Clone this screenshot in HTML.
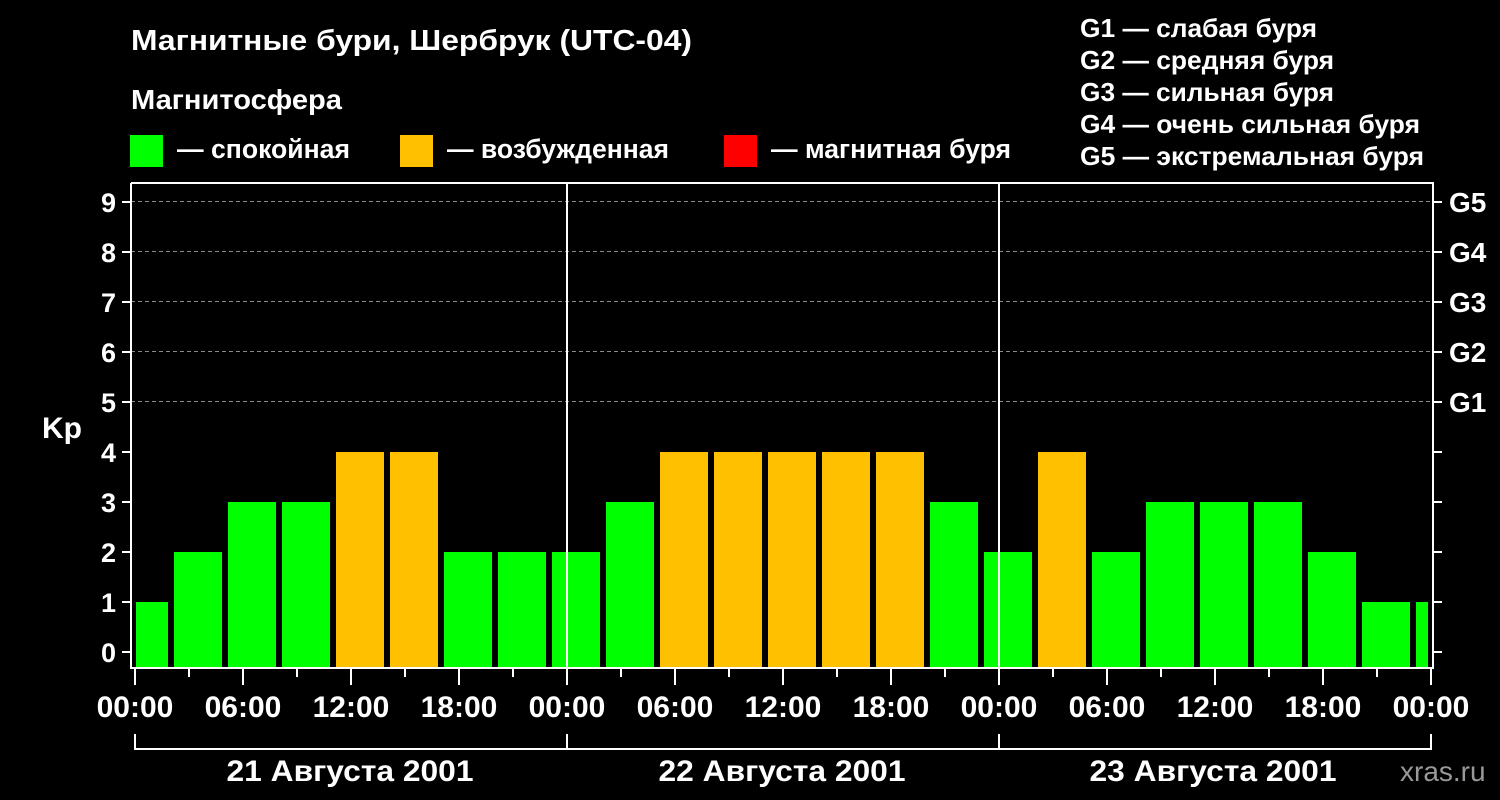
<!DOCTYPE html>
<html><head><meta charset="utf-8"><style>
html,body{margin:0;padding:0;background:#000;width:1500px;height:800px;overflow:hidden}
svg text{font-family:"Liberation Sans",sans-serif;font-weight:bold;fill:#fff}
</style></head><body>
<svg width="1500" height="800" viewBox="0 0 1500 800" xmlns="http://www.w3.org/2000/svg">
<rect width="1500" height="800" fill="#000"/>
<text x="131" y="50" font-size="29" textLength="561" lengthAdjust="spacingAndGlyphs">Магнитные бури, Шербрук (UTC-04)</text>
<text x="131" y="109" font-size="28" textLength="211" lengthAdjust="spacingAndGlyphs">Магнитосфера</text>
<rect x="130" y="135" width="33" height="32" fill="#00ff00"/>
<text x="177" y="158" font-size="27" textLength="173" lengthAdjust="spacingAndGlyphs">— спокойная</text>
<rect x="400" y="135" width="33" height="32" fill="#ffc000"/>
<text x="447" y="158" font-size="27" textLength="222" lengthAdjust="spacingAndGlyphs">— возбужденная</text>
<rect x="724" y="135" width="33" height="32" fill="#ff0000"/>
<text x="771" y="158" font-size="27" textLength="240" lengthAdjust="spacingAndGlyphs">— магнитная буря</text>
<g font-size="26">
<text x="1080" y="37" textLength="237" lengthAdjust="spacingAndGlyphs">G1 — слабая буря</text>
<text x="1080" y="69" textLength="254" lengthAdjust="spacingAndGlyphs">G2 — средняя буря</text>
<text x="1080" y="101" textLength="254" lengthAdjust="spacingAndGlyphs">G3 — сильная буря</text>
<text x="1080" y="133" textLength="340" lengthAdjust="spacingAndGlyphs">G4 — очень сильная буря</text>
<text x="1080" y="165" textLength="344" lengthAdjust="spacingAndGlyphs">G5 — экстремальная буря</text>
</g>
<g stroke="#888" stroke-width="1" stroke-dasharray="4,3">
<line x1="131" y1="201.5" x2="1433" y2="201.5"/>
<line x1="131" y1="251.5" x2="1433" y2="251.5"/>
<line x1="131" y1="301.5" x2="1433" y2="301.5"/>
<line x1="131" y1="351.5" x2="1433" y2="351.5"/>
<line x1="131" y1="401.5" x2="1433" y2="401.5"/>
</g>
<g fill="#00ff00">
<rect x="136" y="602" width="32" height="66"/>
<rect x="174" y="552" width="48" height="116"/>
<rect x="228" y="502" width="48" height="166"/>
<rect x="282" y="502" width="48" height="166"/>
<rect x="444" y="552" width="48" height="116"/>
<rect x="498" y="552" width="48" height="116"/>
<rect x="552" y="552" width="48" height="116"/>
<rect x="606" y="502" width="48" height="166"/>
<rect x="930" y="502" width="48" height="166"/>
<rect x="984" y="552" width="48" height="116"/>
<rect x="1092" y="552" width="48" height="116"/>
<rect x="1146" y="502" width="48" height="166"/>
<rect x="1200" y="502" width="48" height="166"/>
<rect x="1254" y="502" width="48" height="166"/>
<rect x="1308" y="552" width="48" height="116"/>
<rect x="1362" y="602" width="48" height="66"/>
<rect x="1416" y="602" width="12" height="66"/>
</g>
<g fill="#ffc000">
<rect x="336" y="452" width="48" height="216"/>
<rect x="390" y="452" width="48" height="216"/>
<rect x="660" y="452" width="48" height="216"/>
<rect x="714" y="452" width="48" height="216"/>
<rect x="768" y="452" width="48" height="216"/>
<rect x="822" y="452" width="48" height="216"/>
<rect x="876" y="452" width="48" height="216"/>
<rect x="1038" y="452" width="48" height="216"/>
</g>
<g stroke="#fff" stroke-width="2" fill="none">
<path d="M131,183 V668 H1433 V183 H131"/>
<line x1="567" y1="183" x2="567" y2="668"/>
<line x1="999" y1="183" x2="999" y2="668"/>
<path d="M135,734 V749 H1431 V734 M567,734 V749 M999,734 V749"/>
<path d="M122,652H131M122,602H131M122,552H131M122,502H131M122,452H131M122,402H131M122,352H131M122,302H131M122,252H131M122,202H131"/>
<path d="M1433,652H1442M1433,602H1442M1433,552H1442M1433,502H1442M1433,452H1442M1433,402H1442M1433,352H1442M1433,302H1442M1433,252H1442M1433,202H1442"/>
<path d="M135,668V685M189,668V677M243,668V685M297,668V677M351,668V685M405,668V677M459,668V685M513,668V677M567,668V685M621,668V677M675,668V685M729,668V677M783,668V685M837,668V677M891,668V685M945,668V677M999,668V685M1053,668V677M1107,668V685M1161,668V677M1215,668V685M1269,668V677M1323,668V685M1377,668V677M1431,668V685"/>
</g>
<g font-size="27" text-anchor="end">
<text x="116" y="662">0</text><text x="116" y="612">1</text><text x="116" y="562">2</text><text x="116" y="512">3</text><text x="116" y="462">4</text><text x="116" y="412">5</text><text x="116" y="362">6</text><text x="116" y="312">7</text><text x="116" y="262">8</text><text x="116" y="212">9</text>
</g>
<g font-size="28">
<text x="1449" y="212">G5</text><text x="1449" y="262">G4</text><text x="1449" y="312">G3</text><text x="1449" y="362">G2</text><text x="1449" y="412">G1</text>
</g>
<text x="42" y="438" font-size="30">Kp</text>
<g font-size="30" text-anchor="middle">
<text x="135" y="717">00:00</text><text x="243" y="717">06:00</text><text x="351" y="717">12:00</text><text x="459" y="717">18:00</text>
<text x="567" y="717">00:00</text><text x="675" y="717">06:00</text><text x="783" y="717">12:00</text><text x="891" y="717">18:00</text>
<text x="999" y="717">00:00</text><text x="1107" y="717">06:00</text><text x="1215" y="717">12:00</text><text x="1323" y="717">18:00</text>
<text x="1431" y="717">00:00</text>
<text x="350" y="781" textLength="247" lengthAdjust="spacingAndGlyphs">21 Августа 2001</text>
<text x="782" y="781" textLength="247" lengthAdjust="spacingAndGlyphs">22 Августа 2001</text>
<text x="1213" y="781" textLength="247" lengthAdjust="spacingAndGlyphs">23 Августа 2001</text>
</g>
<text x="1400" y="781" font-size="28" style="fill:#999;font-weight:normal">xras.ru</text>
</svg>
</body></html>
